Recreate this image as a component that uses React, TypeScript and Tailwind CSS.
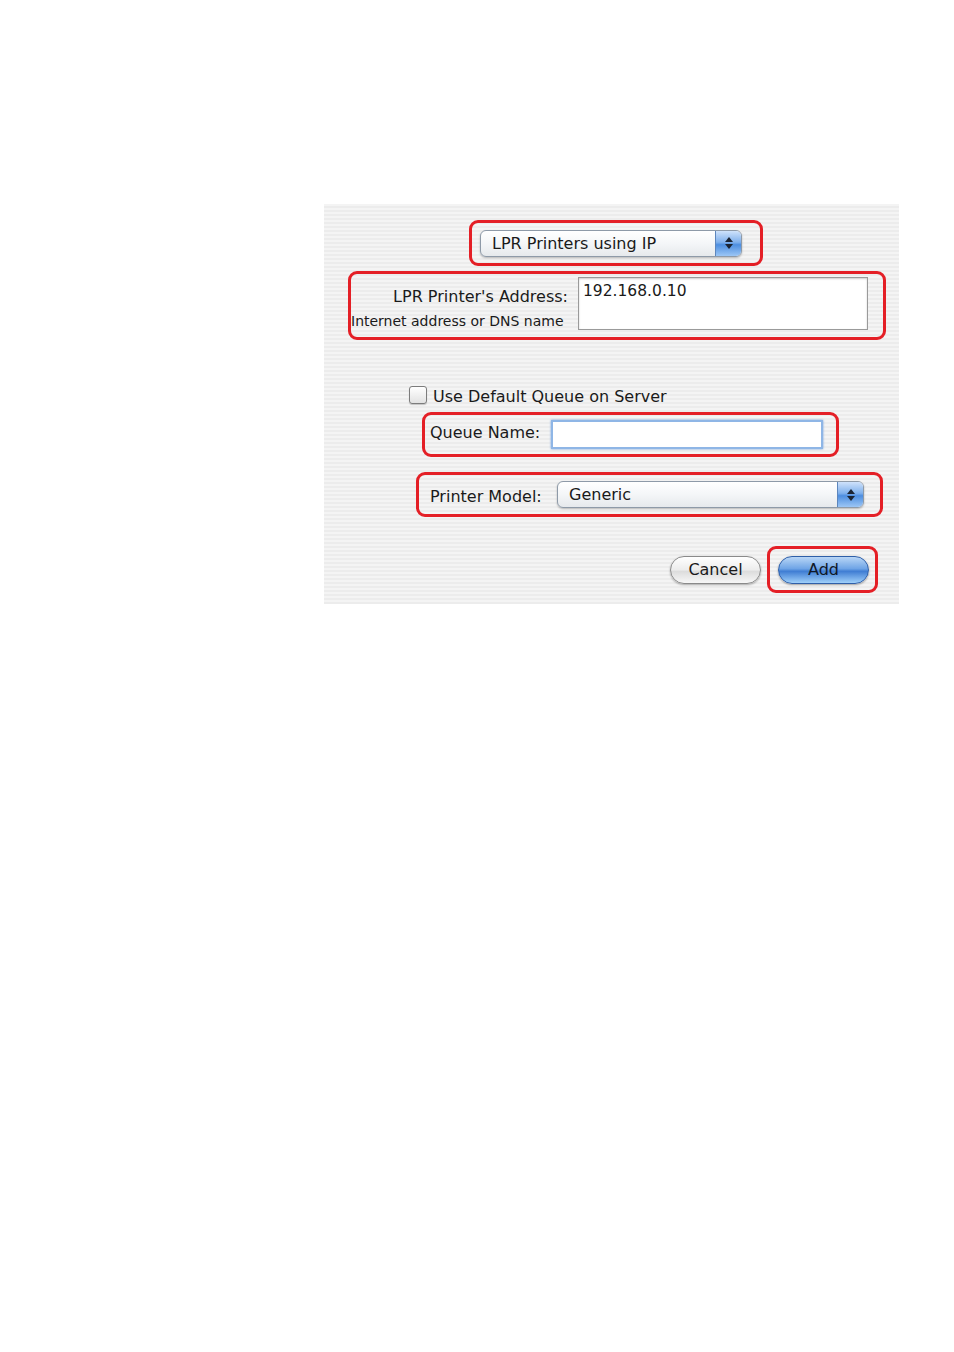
import React from 'react';

const font = { fontFamily: '"DejaVu Sans", "Liberation Sans", sans-serif' };

const Stepper: React.FC = () => (
  <div className="w-[26px] h-full rounded-r-[5px] border-l border-[#5d86bd] bg-[linear-gradient(180deg,#cfe2fb_0%,#7fb0ec_45%,#4d8ee0_55%,#9cc6f5_100%)] flex flex-col items-center justify-center gap-[2px]">
    <svg width="8" height="5" viewBox="0 0 8 5">
      <path d="M4 0 L8 5 L0 5 Z" fill="#1b2433" />
    </svg>
    <svg width="8" height="5" viewBox="0 0 8 5">
      <path d="M0 0 L8 0 L4 5 Z" fill="#1b2433" />
    </svg>
  </div>
);

const Popup: React.FC<{ label: string; width: string }> = ({ label, width }) => (
  <div
    className={`${width} h-[27px] flex items-stretch rounded-[6px] border border-[#8e9aa8] bg-[linear-gradient(180deg,#ffffff_0%,#f4f6f8_50%,#e6e9ec_100%)] shadow-[0_1px_2px_rgba(0,0,0,0.25)]`}
  >
    <span className="flex-1 pl-[11px] text-[16px] leading-[25px] text-[#1a1a1a]">{label}</span>
    <Stepper />
  </div>
);

const RedBox: React.FC<{ className: string; children: React.ReactNode }> = ({ className, children }) => (
  <div className={`border-[3px] border-[#e41f26] rounded-[9px] ${className}`}>{children}</div>
);

export default function App() {
  return (
    <div className="min-h-[1352px] w-full bg-white pt-[204px] pl-[324px]" style={font}>
      <div className="w-[575px] h-[400px] flex flex-col bg-[repeating-linear-gradient(180deg,#f4f4f4_0px,#f4f4f4_2px,#ececec_2px,#ececec_4px)]">
        {/* printer type popup */}
        <RedBox className="ml-[145px] mt-[16px] w-[294px] h-[46px] flex items-center pl-[8px]">
          <Popup label="LPR Printers using IP" width="w-[262px]" />
        </RedBox>

        {/* address */}
        <RedBox className="ml-[24px] mt-[5px] w-[538px] h-[69px] flex items-start pt-[3px]">
          <div className="w-[217px] flex flex-col items-end pt-[9px] text-[#1a1a1a]">
            <span className="text-[16px] leading-[21px]">LPR Printer's Address:</span>
            <span className="text-[14px] leading-[18px] mt-[5px] self-start whitespace-nowrap">Internet address or DNS name</span>
          </div>
          <div className="ml-[10px] w-[290px] h-[53px] bg-white border border-[#9a9a9a] shadow-[inset_0_1px_2px_rgba(0,0,0,0.2)] pl-[4px] pt-[3px] text-[15.5px] leading-[20px] text-[#1a1a1a]">
            192.168.0.10
          </div>
        </RedBox>

        {/* default queue */}
        <div className="ml-[85px] mt-[46px] h-[18px] flex items-center gap-[6px]">
          <div className="w-[18px] h-[18px] rounded-[3px] border border-[#7c7c7c] bg-[linear-gradient(180deg,#ffffff_0%,#e2e2e2_100%)] shadow-[0_1px_1px_rgba(0,0,0,0.2)]" />
          <span className="text-[16px] leading-[18px] pt-[3px] text-[#1a1a1a]">Use Default Queue on Server</span>
        </div>

        {/* queue name */}
        <RedBox className="ml-[98px] mt-[8px] w-[417px] h-[45px] flex items-center pl-[5px]">
          <span className="w-[121px] text-[16px] text-[#1a1a1a] pb-[3px]">Queue Name:</span>
          <div className="w-[272px] h-[29px] bg-white border-[2px] border-[#8fb6e6] shadow-[0_0_2px_#6fa0df]" />
        </RedBox>

        {/* printer model */}
        <RedBox className="ml-[92px] mt-[15px] w-[467px] h-[45px] flex items-center pl-[11px]">
          <span className="w-[127px] text-[16px] text-[#1a1a1a] pt-[4px]">Printer Model:</span>
          <Popup label="Generic" width="w-[307px]" />
        </RedBox>

        {/* buttons */}
        <div className="ml-[346px] mt-[29px] flex items-center">
          <button className="w-[91px] h-[28px] rounded-full border border-[#8a8a8a] bg-[linear-gradient(180deg,#ffffff_0%,#ececec_50%,#dcdcdc_55%,#f7f7f7_100%)] shadow-[0_1px_2px_rgba(0,0,0,0.3)] text-[16px] text-[#1a1a1a]">
            Cancel
          </button>
          <RedBox className="ml-[6px] w-[111px] h-[47px] flex items-center pl-[8px]">
            <button className="w-[91px] h-[28px] rounded-full border border-[#2f5fa8] bg-[linear-gradient(180deg,#b9d6f6_0%,#6ea4e6_45%,#3f7dd3_55%,#9fd0fa_100%)] shadow-[0_1px_2px_rgba(0,0,0,0.35)] text-[16px] text-[#101827]">
              Add
            </button>
          </RedBox>
        </div>
      </div>
    </div>
  );
}
